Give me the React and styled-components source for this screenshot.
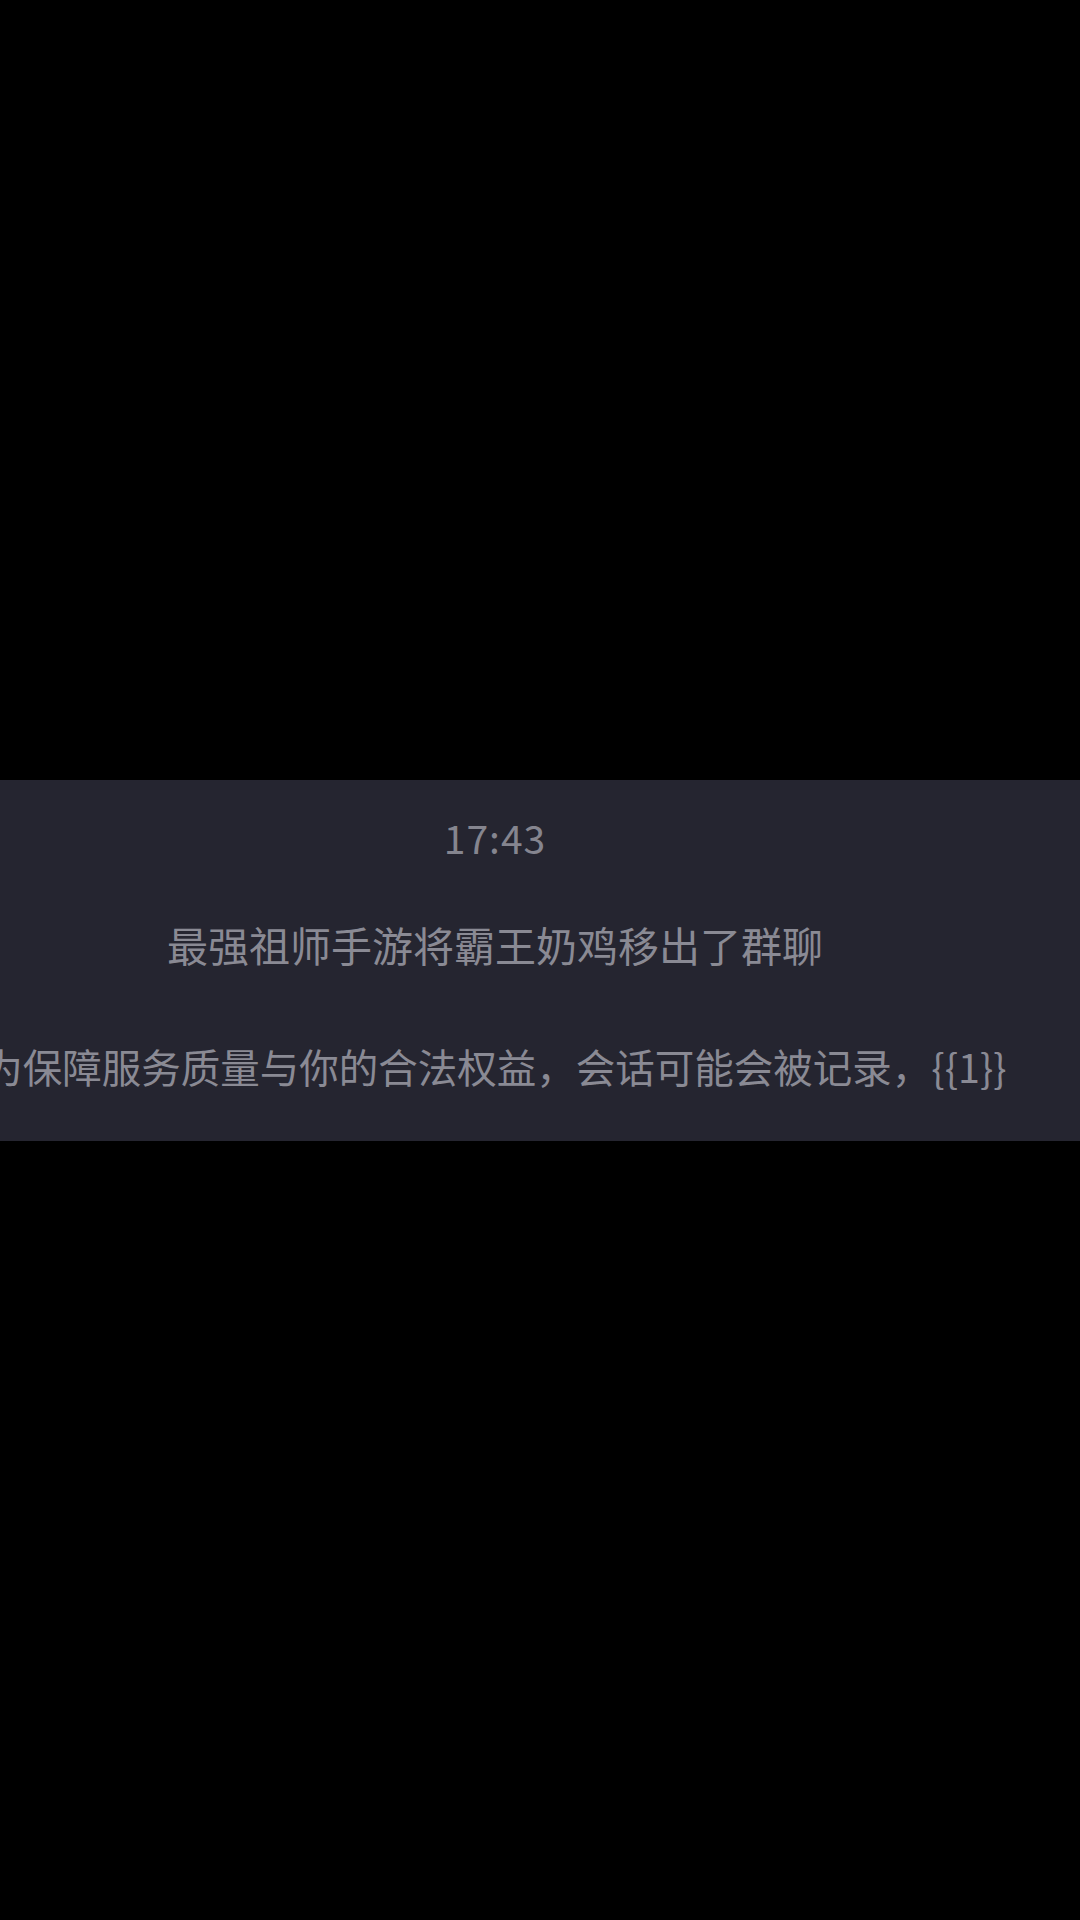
import styled, { createGlobalStyle } from 'styled-components';

const GlobalStyle = createGlobalStyle`
  html, body {
    margin: 0;
    padding: 0;
    background: #000;
    overflow: hidden;
  }
  * {
    box-sizing: border-box;
  }
`;

const Page = styled.div`
  display: flex;
  flex-direction: column;
  justify-content: center;
  width: 1080px;
  height: 1920px;
  background: #000;
  font-family: "Noto Sans CJK SC", "Noto Sans", sans-serif;
`;

const Panel = styled.div`
  display: flex;
  flex-direction: column;
  align-items: center;
  width: 100%;
  height: 361px;
  padding: 32px 90px 0 0;
  background: #252530;
`;

const Time = styled.div`
  font-size: 39px;
  line-height: 50px;
  letter-spacing: 1px;
  color: #85858f;
`;

const Notice = styled.div`
  margin-top: ${props => props.gap}px;
  font-size: ${props => props.size}px;
  line-height: 56px;
  color: #8a8a94;
  white-space: nowrap;
`;

const App = () => {
  return (
    <>
      <GlobalStyle />
      <Page>
        <Panel>
          <Time>17:43</Time>
          <Notice gap={54} size={41}>最强祖师手游将霸王奶鸡移出了群聊</Notice>
          <Notice gap={66} size={39.5}>为保障服务质量与你的合法权益，会话可能会被记录，{'{{1}}'}</Notice>
        </Panel>
      </Page>
    </>
  );
};

export default App;
